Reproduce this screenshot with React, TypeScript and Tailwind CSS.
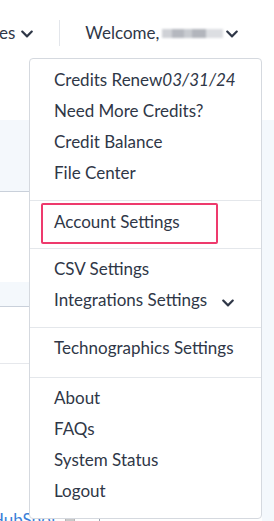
import { FaChevronDown } from 'react-icons/fa'

const groups: string[][] = [
  ['Credits Renew', 'Need More Credits?', 'Credit Balance', 'File Center'],
  ['Account Settings'],
  ['CSV Settings', 'Integrations Settings'],
  ['Technographics Settings'],
  ['About', 'FAQs', 'System Status', 'Logout'],
]

const MenuRow = ({ label }: { label: string }) => {
  if (label === 'Credits Renew') {
    return (
      <div className="h-[31px] pb-[4px] flex items-center">
        Credits Renew<span className="italic">03/31/24</span>
      </div>
    )
  }
  if (label === 'Integrations Settings') {
    return (
      <div className="h-[31px] pb-[4px] flex items-center">
        <span>Integrations Settings</span>
        <FaChevronDown className="ml-[14px] mt-[6px] text-[#2f3747]" size={14} />
      </div>
    )
  }
  return <div className="h-[31px] pb-[4px] flex items-center">{label}</div>
}

const App = () => {
  return (
    <div className="relative w-[274px] h-[521px] overflow-hidden bg-white text-[#2f3747] font-['Lato','Liberation_Sans',sans-serif]">
      {/* page behind the menu */}
      <header className="h-[120px] relative">
        <div className="flex items-center h-[66px] text-[17px]">
          <span className="-ml-[1px]">es</span>
          <FaChevronDown className="ml-[5px] mt-[1px]" size={14} />
          <div className="ml-[25px] w-px h-[26px] bg-[#e3e6eb]" />
          <span className="ml-[25px]">Welcome,</span>
          <span className="ml-[3px] mt-[1px] flex h-[9px] w-[61px] blur-[1.2px]">
            <span className="w-[10px] bg-[#cfd1d6]" />
            <span className="w-[12px] bg-[#b5b8bf]" />
            <span className="w-[8px] bg-[#c8cbd0]" />
            <span className="w-[14px] bg-[#b2b5bc]" />
            <span className="w-[17px] bg-[#dcdee2]" />
          </span>
          <FaChevronDown className="ml-[2px] mt-[1px]" size={14} />
        </div>
      </header>

      <div className="flex">
        <div className="flex-1">
          <div className="h-[72px] bg-[#f4f8fc] border-b border-[#c9d0da]" />
          <div className="h-[90px]" />
          <div className="h-[25px] bg-[#f4f8fc] border-b border-[#c9d0da]" />
          <div className="h-[57px] border-b border-[#e6e8ec]" />
          <div className="h-[146px]" />
          <div className="flex items-start h-[20px] text-[17px] leading-[20px] text-[#3b7fd8]">
            <span className="-ml-[9px]">HubSpot</span>
            <div className="ml-[8px] mt-[3px] w-[10px] h-[10px] bg-[#c9c9c9] border border-[#b5b5b5]" />
            <div className="ml-[24px] mt-[2px] w-px h-[20px] bg-[#9aa3ae]" />
          </div>
        </div>
        <div className="w-[12px] bg-[#f4f8fc]" />
      </div>

      {/* dropdown menu */}
      <div className="absolute left-[29px] top-[58px] w-[233px] bg-white border border-[#d5d9df] rounded-[4px] text-[17px] text-[#2f3747]">
        {groups.map((items, gi) => (
          <div
            key={gi}
            className={
              gi === 0
                ? 'pl-[24px] pt-[7px] pb-[10px]'
                : gi === 1
                  ? 'border-t border-[#e4e7eb] pt-[2px] pb-[4px]'
                  : gi === 3
                    ? 'border-t border-[#e4e7eb] pl-[24px] pt-[6px] pb-[12px]'
                    : 'border-t border-[#e4e7eb] pl-[24px] pt-[6px] pb-[10px]'
            }
          >
            {gi === 1 ? (
              <div className="ml-[11px] w-[177px] h-[41px] pb-[3px] border-2 border-[#ee3a6d] rounded-[2px] flex items-center pl-[11px]">
                Account Settings
              </div>
            ) : (
              items.map((label) => <MenuRow key={label} label={label} />)
            )}
          </div>
        ))}
      </div>
    </div>
  )
}

export default App
